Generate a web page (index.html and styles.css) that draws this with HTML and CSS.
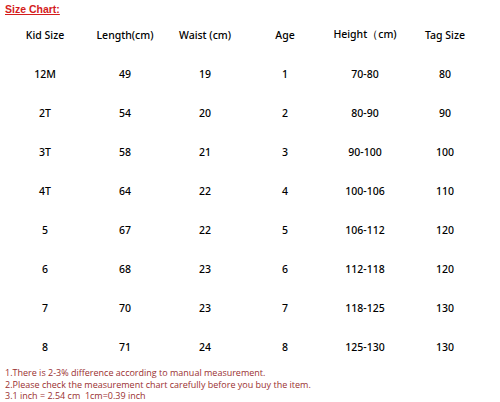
FILE: index.html
```html
<!DOCTYPE html>
<html>
<head>
<meta charset="utf-8">
<link rel="stylesheet" href="styles.css">
</head>
<body>
<div class="page">
  <div class="title">Size Chart:</div>
  <div class="chart">
    <div class="row head"><span>Kid Size</span><span>Length(cm)</span><span>Waist (cm)</span><span>Age</span><span>Height（cm)</span><span>Tag Size</span></div>
    <div class="row"><span>12M</span><span>49</span><span>19</span><span>1</span><span>70-80</span><span>80</span></div>
    <div class="row"><span>2T</span><span>54</span><span>20</span><span>2</span><span>80-90</span><span>90</span></div>
    <div class="row"><span>3T</span><span>58</span><span>21</span><span>3</span><span>90-100</span><span>100</span></div>
    <div class="row"><span>4T</span><span>64</span><span>22</span><span>4</span><span>100-106</span><span>110</span></div>
    <div class="row"><span>5</span><span>67</span><span>22</span><span>5</span><span>106-112</span><span>120</span></div>
    <div class="row"><span>6</span><span>68</span><span>23</span><span>6</span><span>112-118</span><span>120</span></div>
    <div class="row"><span>7</span><span>70</span><span>23</span><span>7</span><span>118-125</span><span>130</span></div>
    <div class="row"><span>8</span><span>71</span><span>24</span><span>8</span><span>125-130</span><span>130</span></div>
  </div>
  <div class="notes">
    <p>1.There is 2-3% difference according to manual measurement.</p>
    <p>2.Please check the measurement chart carefully before you buy the item.</p>
    <p>3.1 inch = 2.54 cm&nbsp;&nbsp;1cm=0.39 inch</p>
  </div>
</div>
</body>
</html>
```
FILE: styles.css
```css
html, body {
  margin: 0;
  padding: 0;
  background: #fff;
}
.page {
  width: 500px;
  height: 402px;
  overflow: hidden;
  padding-left: 5px;
  box-sizing: border-box;
}
.title {
  font-family: "Liberation Sans", Arial, sans-serif;
  font-weight: bold;
  font-size: 10.5px;
  color: #d41c1c;
  text-decoration: underline;
  line-height: 12px;
  padding-top: 3px;
}
.chart {
  display: flex;
  flex-direction: column;
}
.row {
  display: grid;
  grid-template-columns: repeat(6, 80px);
  height: 39px;
  align-items: center;
  font-family: "Noto Sans", sans-serif;
  font-size: 10.5px;
  font-weight: 500;
  color: #000;
}
.row span {
  text-align: center;
}
.notes {
  font-family: "Open Sans", sans-serif;
  font-size: 9px;
  color: #9a3030;
  line-height: 11.5px;
  padding-top: 1px;
}
.notes p {
  margin: 0;
  white-space: nowrap;
}
```
